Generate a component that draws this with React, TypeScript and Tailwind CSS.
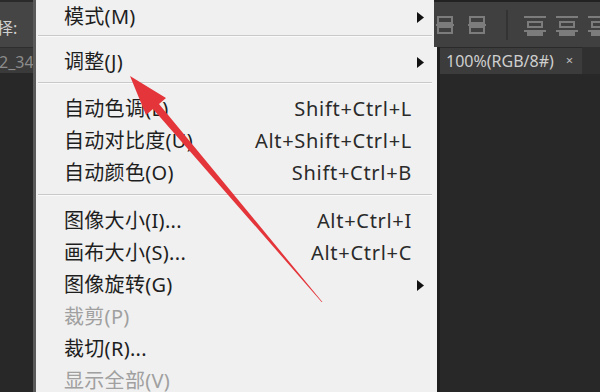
import React from "react";

type Item =
  | { kind: "item"; label: string; shortcut?: string; sub?: boolean; disabled?: boolean }
  | { kind: "sep"; mt: number; mb: number };

const items: Item[] = [
  { kind: "item", label: "模式(M)", sub: true },
  { kind: "sep", mt: 3, mb: 9 },
  { kind: "item", label: "调整(J)", sub: true },
  { kind: "sep", mt: 5, mb: 9 },
  { kind: "item", label: "自动色调(L)", shortcut: "Shift+Ctrl+L" },
  { kind: "item", label: "自动对比度(U)", shortcut: "Alt+Shift+Ctrl+L" },
  { kind: "item", label: "自动颜色(O)", shortcut: "Shift+Ctrl+B" },
  { kind: "sep", mt: 6, mb: 9 },
  { kind: "item", label: "图像大小(I)...", shortcut: "Alt+Ctrl+I" },
  { kind: "item", label: "画布大小(S)...", shortcut: "Alt+Ctrl+C" },
  { kind: "item", label: "图像旋转(G)", sub: true },
  { kind: "item", label: "裁剪(P)", disabled: true },
  { kind: "item", label: "裁切(R)..." },
  { kind: "item", label: "显示全部(V)", disabled: true },
];

const font = { fontFamily: '"Noto Sans", "Noto Sans CJK SC", sans-serif' };

function Tri() {
  return (
    <svg width="7" height="11" viewBox="0 0 7 11" className="absolute left-[381px]">
      <polygon points="0,0 7,5.5 0,11" fill="#111" />
    </svg>
  );
}

function AlignIcon({ variant }: { variant: number }) {
  return (
    <svg width="26" height="22" viewBox="0 0 26 22" className="shrink-0">
      {variant === 0 && (
        <g fill="none" stroke="#7c7c7c" strokeWidth="2">
          <rect x="4" y="3" width="14" height="6" />
          <rect x="4" y="13" width="14" height="6" />
          <line x1="2" y1="11" x2="20" y2="11" />
        </g>
      )}
      {variant === 1 && (
        <g fill="none" stroke="#7c7c7c" strokeWidth="2">
          <line x1="2" y1="3" x2="24" y2="3" />
          <rect x="6" y="8" width="14" height="5" />
          <line x1="2" y1="17" x2="24" y2="17" />
          <rect x="6" y="19" width="14" height="2" />
        </g>
      )}
    </svg>
  );
}

export default function App() {
  return (
    <div className="relative w-[600px] h-[392px] overflow-hidden bg-[#282828] flex" style={font}>
      {/* left strip */}
      <div className="w-[33px] flex flex-col shrink-0">
        <div className="h-[47px] bg-[#454545] flex items-center text-[16px] text-[#d0d0d0] border-t-2 border-[#2a2a2a]">
          <span className="-ml-[3px] pt-[6px]">择:</span>
        </div>
        <div className="h-[26px] bg-[#3a3a3a] flex items-center text-[16px] text-[#8c8c8c] border-t border-[#2e2e2e]">
          <span className="-ml-[1px] pt-[2px]">2_34</span>
        </div>
        <div className="flex-1 bg-[#282828]" />
      </div>
      <div className="w-[3px] bg-[#5a5a5a] shrink-0" />
      {/* menu */}
      <div className="w-[401px] shrink-0 bg-[#f0f0f0] flex flex-col pt-[1px]">
        {items.map((it, i) =>
          it.kind === "sep" ? (
            <div
              key={i}
              className="h-[2px] shrink-0 bg-[#c9c9c9] ml-[2px] mr-[5px] border-b border-[#fafafa]"
              style={{ marginTop: it.mt - 1, marginBottom: it.mb }}
            />
          ) : (
            <div key={i} className="relative h-[32px] flex items-center shrink-0">
              <span
                className={
                  "absolute left-[28px] text-[20px] leading-none tracking-[0.3px] " +
                  (it.disabled ? "text-[#a0a0a0]" : "text-[#1e1e1e]")
                }
              >
                {it.label}
              </span>
              {it.shortcut && (
                <span className="absolute right-[25px] text-[20px] leading-none tracking-[0.7px] text-[#2a2a2a]">
                  {it.shortcut}
                </span>
              )}
              {it.sub && <Tri />}
            </div>
          )
        )}
      </div>
      <div className="w-[3px] bg-[#1e1e1e] shrink-0" />
      {/* right side */}
      <div className="flex-1 flex flex-col min-w-0">
        <div className="h-[47px] bg-[#404040] border-t-2 border-[#222] flex items-center gap-[6px] -ml-[6px]">
          <AlignIcon variant={0} />
          <AlignIcon variant={0} />
          <div className="w-[2px] h-[30px] shrink-0 bg-[#333] mx-[8px]" />
          <AlignIcon variant={1} />
          <AlignIcon variant={1} />
          <AlignIcon variant={1} />
        </div>
        <div className="h-[27px] flex bg-[#303030]">
          <div className="w-[142px] bg-[#3c3c3c] flex items-center text-[16px] text-[#cfcfcf] pl-[6px] border-t border-[#2a2a2a] whitespace-nowrap">
            <span>100%(RGB/8#)</span>
            <span className="ml-[12px] text-[13px] text-[#bbb]">×</span>
          </div>
        </div>
        <div className="flex-1 bg-[#282828]" />
      </div>
      {/* red annotation arrow */}
      <svg className="absolute left-0 top-0 pointer-events-none" width="600" height="392" viewBox="0 0 600 392">
        <polygon
          points="130,76 166,98 159,104 322.4,302 321.6,302 153,109 146,115"
          fill="#e3353a"
        />
      </svg>
    </div>
  );
}
